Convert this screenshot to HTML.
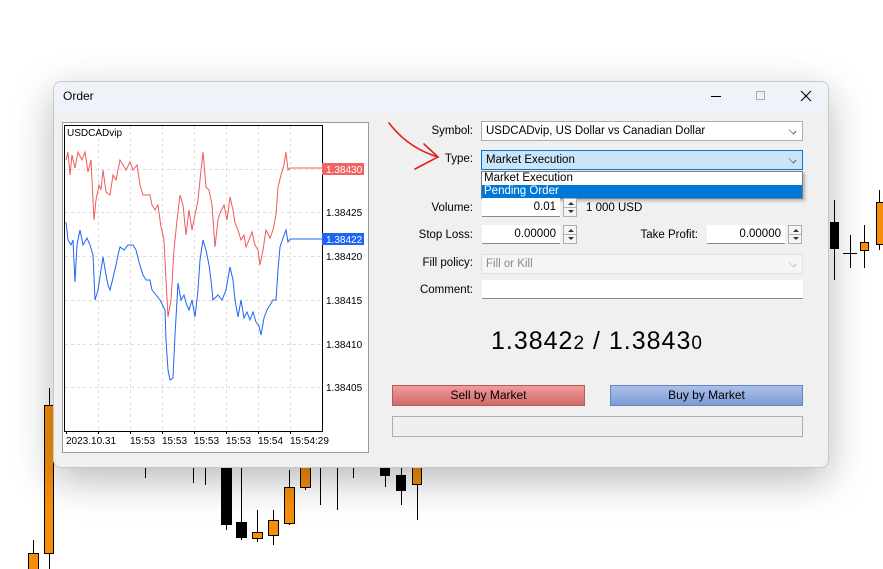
<!DOCTYPE html>
<html><head><meta charset="utf-8"><style>
*{margin:0;padding:0;box-sizing:border-box}
body{width:883px;height:569px;background:#fff;position:relative;overflow:hidden;font-family:"Liberation Sans","DejaVu Sans",sans-serif;font-size:12px;color:#000}
.a{position:absolute}
.dlg{left:53px;top:81px;width:776px;height:387px;background:#f0f0f0;border:1px solid #c8c8c8;border-radius:8px;box-shadow:0 12px 40px rgba(0,0,0,.28);overflow:hidden}
.tb{left:0;top:0;width:100%;height:30px;background:#eff3f9}
.lbl{text-align:right;width:120px;font-size:11.5px}
.box{background:#fff;border:1px solid #adadad;height:20px;font-size:11.5px;line-height:18px;padding-left:4px}
.inp{background:#fff;border-bottom:1px solid #8a8a8a;height:19px;font-size:11.5px;line-height:18px;text-align:right;padding-right:4px}
.spin{width:14px;height:19px;border:1px solid #adadad;background:#f5f5f5}
.spin:before{content:"";position:absolute;left:4px;top:3px;border:3px solid transparent;border-bottom:3px solid #333;border-top:0}
.spin:after{content:"";position:absolute;left:4px;bottom:3px;border:3px solid transparent;border-top:3px solid #333;border-bottom:0}
.spin i{position:absolute;left:0;top:8px;width:12px;height:1px;background:#adadad}
.chev{position:absolute;right:6px;top:5px;width:7px;height:7px;border-right:1px solid #555;border-bottom:1px solid #555;transform:rotate(45deg) scaleY(.6)}
</style></head><body>
<svg class="a" style="left:0;top:0" width="883" height="569">
<g stroke="#000" stroke-width="1">
<line x1="33.5" y1="540" x2="33.5" y2="569"/><line x1="49.5" y1="388" x2="49.5" y2="569"/>
<line x1="145.5" y1="460" x2="145.5" y2="478"/><line x1="193.5" y1="460" x2="193.5" y2="483"/><line x1="205.5" y1="460" x2="205.5" y2="485"/>
<line x1="226.5" y1="460" x2="226.5" y2="530"/><line x1="241.5" y1="460" x2="241.5" y2="540"/><line x1="257.5" y1="510" x2="257.5" y2="542"/>
<line x1="273.5" y1="510" x2="273.5" y2="545"/><line x1="289.5" y1="470" x2="289.5" y2="525"/><line x1="305.5" y1="460" x2="305.5" y2="490"/>
<line x1="320.5" y1="460" x2="320.5" y2="505"/><line x1="337.5" y1="460" x2="337.5" y2="510"/><line x1="353.5" y1="460" x2="353.5" y2="478"/>
<line x1="385.5" y1="460" x2="385.5" y2="487"/><line x1="401.5" y1="460" x2="401.5" y2="505"/><line x1="417.5" y1="460" x2="417.5" y2="520"/>
<line x1="834.5" y1="200" x2="834.5" y2="280"/><line x1="850.5" y1="235" x2="850.5" y2="268"/><line x1="864.5" y1="225" x2="864.5" y2="268"/><line x1="879.5" y1="190" x2="879.5" y2="250"/>
<line x1="843" y1="253.5" x2="857" y2="253.5"/>
</g>
<g stroke="#000">
<rect x="28.5" y="553.5" width="10" height="16" fill="#f68e0c"/><rect x="44.5" y="405.5" width="9" height="148" fill="#f68e0c"/>
<rect x="221.5" y="468.5" width="10" height="56" fill="#000"/><rect x="236.5" y="522.5" width="10" height="15" fill="#000"/>
<rect x="252.5" y="532.5" width="10" height="6" fill="#f68e0c"/><rect x="268.5" y="520.5" width="10" height="15" fill="#f68e0c"/>
<rect x="284.5" y="487.5" width="10" height="36" fill="#f68e0c"/><rect x="300.5" y="466.5" width="10" height="21" fill="#f68e0c"/>
<rect x="380.5" y="466.5" width="9" height="9" fill="#000"/><rect x="396.5" y="475.5" width="9" height="15" fill="#000"/>
<rect x="412.5" y="466.5" width="9" height="18" fill="#f68e0c"/>
<rect x="830.5" y="222.5" width="8" height="26" fill="#000"/><rect x="860.5" y="242.5" width="8" height="8" fill="#f68e0c"/><rect x="876.5" y="202.5" width="8" height="42" fill="#f68e0c"/>
</g>
</svg>

<div class="a dlg">
 <div class="a tb"></div>
 <div class="a" style="left:9px;top:7px;font-size:12px">Order</div>
 <div class="a" style="left:657px;top:14px;width:10px;height:1px;background:#000"></div>
 <div class="a" style="left:702px;top:9px;width:9px;height:9px;border:1px solid #aaa"></div>
 <svg class="a" style="left:746px;top:8px" width="12" height="12"><path d="M1 1L11 11M11 1L1 11" stroke="#000" stroke-width="1.1"/></svg>
 <div class="a" style="left:8px;top:40px;width:307px;height:331px;background:#fff;border:1px solid #9a9a9a"></div>
</div>

<svg class="a" style="left:0;top:0" width="883" height="569" font-family="Liberation Sans,sans-serif" font-size="10">
 <rect x="64.5" y="125.5" width="258" height="306" fill="#fff" stroke="#000"/>
 <g stroke="#ddd" stroke-dasharray="3,3">
  <line x1="65" y1="212.5" x2="322" y2="212.5"/><line x1="65" y1="256.5" x2="322" y2="256.5"/><line x1="65" y1="300.5" x2="322" y2="300.5"/><line x1="65" y1="344.5" x2="322" y2="344.5"/><line x1="65" y1="387.5" x2="322" y2="387.5"/><line x1="65" y1="169.5" x2="322" y2="169.5"/>
  <line x1="98.5" y1="126" x2="98.5" y2="431"/><line x1="130.5" y1="126" x2="130.5" y2="431"/><line x1="162.5" y1="126" x2="162.5" y2="431"/><line x1="194.5" y1="126" x2="194.5" y2="431"/><line x1="226.5" y1="126" x2="226.5" y2="431"/><line x1="258.5" y1="126" x2="258.5" y2="431"/><line x1="290.5" y1="126" x2="290.5" y2="431"/>
 </g>
 <text x="67" y="136" font-size="10">USDCADvip</text>
 <polyline fill="none" stroke="#f05a5a" stroke-width="1" points="66,160 68,152 70,175 72,155 75,168 78,152 82,160 85,152 88,172 91,160 94,220 96,200 99,185 101,190 103,170 106,192 110,195 113,175 116,180 120,160 123,165 126,170 130,162 133,170 137,165 140,185 143,195 147,195 150,195 152,205 155,210 158,205 161,227 164,240 166,280 168,317 171,300 174,250 177,220 180,195 183,205 186,235 189,210 192,230 195,215 198,200 200,180 203,152 206,187 209,190 212,205 215,247 218,220 220,213 224,205 227,220 230,197 233,210 235,223 238,230 241,240 244,235 246,247 249,240 252,232 255,245 258,250 260,265 263,250 266,230 270,238 273,230 276,215 278,187 281,175 284,165 286,152 288,170 290,168 322,168"/>
 <polyline fill="none" stroke="#1e64f5" stroke-width="1" points="66,222 68,240 71,245 73,240 75,282 77,245 80,230 83,245 87,238 90,245 93,255 95,300 98,290 101,270 103,257 106,275 108,285 110,290 113,278 116,265 118,255 120,247 124,250 128,245 133,245 136,250 139,262 143,275 146,280 150,280 152,290 156,295 160,300 165,310 166,340 168,370 170,380 173,378 175,335 178,283 181,300 184,295 186,303 189,310 192,300 195,317 198,290 200,260 203,240 206,250 209,265 211,280 213,300 218,295 222,300 226,290 230,267 233,280 235,300 238,317 241,300 244,318 247,312 250,320 253,312 256,322 259,326 261,335 264,318 267,310 270,305 273,300 276,300 278,270 280,247 283,238 286,230 288,242 290,239 322,239"/>
 <rect x="322" y="163" width="42" height="12" fill="#f06464"/><text x="326" y="173" fill="#fff">1.38430</text>
 <rect x="322" y="233" width="42" height="12" fill="#1e64f5"/><text x="326" y="243" fill="#fff">1.38422</text>
 <g fill="#000"><text x="326" y="216">1.38425</text><text x="326" y="260">1.38420</text><text x="326" y="304">1.38415</text><text x="326" y="348">1.38410</text><text x="326" y="391">1.38405</text>
 <text x="66" y="444">2023.10.31</text><text x="130" y="444">15:53</text><text x="162" y="444">15:53</text><text x="194" y="444">15:53</text><text x="226" y="444">15:53</text><text x="258" y="444">15:54</text><text x="290" y="444">15:54:29</text></g>
 <g stroke="#000"><line x1="66.5" y1="431" x2="66.5" y2="434"/><line x1="98.5" y1="431" x2="98.5" y2="434"/><line x1="130.5" y1="431" x2="130.5" y2="434"/><line x1="162.5" y1="431" x2="162.5" y2="434"/><line x1="194.5" y1="431" x2="194.5" y2="434"/><line x1="226.5" y1="431" x2="226.5" y2="434"/><line x1="258.5" y1="431" x2="258.5" y2="434"/><line x1="290.5" y1="431" x2="290.5" y2="434"/></g>
 <g fill="none" stroke="#e02020" stroke-width="1.6" stroke-linecap="round">
  <path d="M389 123 Q408 148 438 157"/><path d="M424 144 L438 157 L415 169"/>
 </g>
</svg>

<div class="a lbl" style="left:353px;top:125px">Symbol:</div>
<div class="a box" style="left:481px;top:121px;width:322px">USDCADvip, US Dollar vs Canadian Dollar<span class="chev"></span></div>
<div class="a lbl" style="left:353px;top:153px">Type:</div>
<div class="a box" style="left:481px;top:150px;width:322px;background:#cce4f7;border-color:#0078d7">Market Execution<span class="chev"></span></div>
<div class="a" style="left:481px;top:171px;width:322px;height:28px;background:#fff;border:1px solid #7a7a7a;box-shadow:2px 2px 3px rgba(0,0,0,.25);font-size:11.5px">
 <div style="height:13px;line-height:13px;padding-left:2px">Market Execution</div>
 <div style="height:13px;line-height:13px;padding-left:2px;background:#0078d7;color:#fff">Pending Order</div>
</div>
<div class="a lbl" style="left:353px;top:202px">Volume:</div>
<div class="a inp" style="left:482px;top:198px;width:78px">0.01</div>
<div class="a spin" style="left:563px;top:198px"><i></i></div>
<div class="a" style="left:586px;top:202px;font-size:11.5px">1 000 USD</div>
<div class="a lbl" style="left:353px;top:229px">Stop Loss:</div>
<div class="a inp" style="left:482px;top:225px;width:78px">0.00000</div>
<div class="a spin" style="left:563px;top:225px"><i></i></div>
<div class="a" style="left:578px;top:229px;width:120px;text-align:right;font-size:11.5px">Take Profit:</div>
<div class="a inp" style="left:707px;top:225px;width:78px">0.00000</div>
<div class="a spin" style="left:788px;top:225px"><i></i></div>
<div class="a lbl" style="left:353px;top:257px">Fill policy:</div>
<div class="a box" style="left:481px;top:254px;width:322px;background:#f5f5f5;border-color:#e0e0e0;color:#8a8a8a">Fill or Kill<span class="chev" style="border-color:#bbb"></span></div>
<div class="a lbl" style="left:353px;top:284px">Comment:</div>
<div class="a inp" style="left:482px;top:280px;width:321px"></div>
<div class="a" style="left:491px;top:327px;font-size:25px;letter-spacing:1px">1.3842<span style="font-size:19px">2</span> / 1.3843<span style="font-size:19px">0</span></div>
<div class="a" style="left:392px;top:385px;width:193px;height:21px;background:linear-gradient(#f29a9a,#d06a6a);border:1px solid #b85a5a;text-align:center;line-height:19px">Sell by Market</div>
<div class="a" style="left:610px;top:385px;width:193px;height:21px;background:linear-gradient(#a9c0ec,#7f9bd4);border:1px solid #6a85bd;text-align:center;line-height:19px">Buy by Market</div>
<div class="a" style="left:392px;top:416px;width:411px;height:21px;border:1px solid #adadad;background:#efefef"></div>
</body></html>
